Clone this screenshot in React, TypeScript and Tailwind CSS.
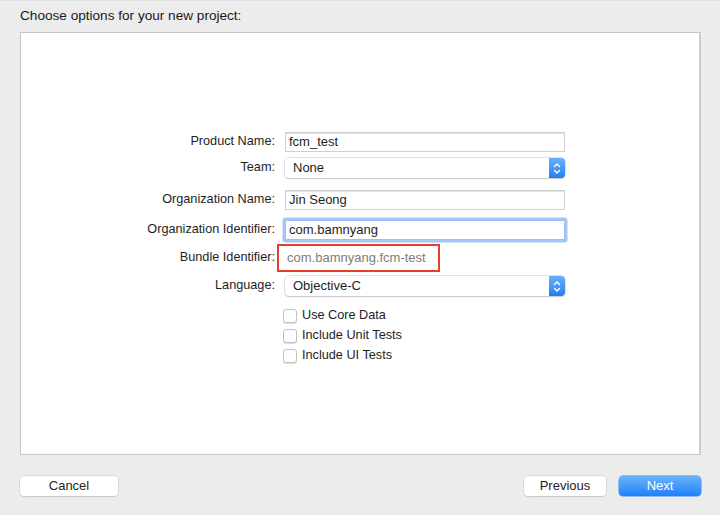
import React from "react";

function Stepper() {
  return (
    <div className="w-[16px] h-full rounded-r-[4px] bg-gradient-to-b from-[#69b1fa] to-[#1c7ff5] flex items-center justify-center">
      <svg width="8" height="13" viewBox="0 0 8 13" fill="none" stroke="white" strokeWidth="1.4" strokeLinecap="round" strokeLinejoin="round">
        <path d="M1.5 4.5 L4 2 L6.5 4.5" />
        <path d="M1.5 8.5 L4 11 L6.5 8.5" />
      </svg>
    </div>
  );
}

function Label({ children }: { children: React.ReactNode }) {
  return <div className="w-[255px] shrink-0 text-right pr-[1px] text-[12.7px] text-[#1e1e1e]">{children}</div>;
}

function TextField({ value }: { value: string }) {
  return (
    <div className="w-[280px] h-[20px] bg-white border border-[#cfcfcf] shadow-[inset_0_1px_0_#e4e4e4] flex items-center pl-[3px] text-[13px] text-[#1e1e1e]">
      {value}
    </div>
  );
}

function Popup({ value }: { value: string }) {
  return (
    <div className="w-[280px] h-[20px] bg-white rounded-[4px] shadow-[0_0_0_0.5px_#c4c4c4,0_1px_1px_#cfcfcf] flex items-center justify-between">
      <span className="pl-[8px] text-[13px] text-[#1e1e1e]">{value}</span>
      <Stepper />
    </div>
  );
}

function Check({ label }: { label: string }) {
  return (
    <div className="flex items-center h-[20px]">
      <div className="w-[14px] h-[14px] rounded-[3px] bg-white border border-[#c2c2c2] shadow-[0_1px_0_#e0e0e0]" />
      <span className="ml-[5px] text-[12.7px] text-[#1e1e1e]">{label}</span>
    </div>
  );
}

export default function App() {
  return (
    <div
      className="w-[720px] h-[515px] bg-[#ececec] flex flex-col border-t border-[#e2e2e2]"
      style={{ fontFamily: '"Liberation Sans", Arial, sans-serif' }}
    >
      <div className="h-[31px] pl-[20px] pt-[7px] text-[13.6px] leading-[16px] text-[#1a1a1a]">Choose options for your new project:</div>
      <div className="ml-[20px] w-[681px] h-[423px] bg-white border border-[#c6c6c6] border-r-2 border-r-[#cdcdcd] flex flex-col pt-[99px]">
        <div className="flex items-center gap-[9px]">
          <Label>Product Name:</Label>
          <TextField value="fcm_test" />
        </div>
        <div className="flex items-center gap-[9px] mt-[6px]">
          <Label>Team:</Label>
          <Popup value="None" />
        </div>
        <div className="flex items-center gap-[9px] mt-[12px]">
          <Label>Organization Name:</Label>
          <TextField value="Jin Seong" />
        </div>
        <div className="flex items-center gap-[9px] mt-[10px]">
          <Label>Organization Identifier:</Label>
          <div className="w-[280px] h-[20px] bg-white border border-[#9bbfef] shadow-[0_0_0_2.5px_#a6c8f4] rounded-[1px] flex items-center pl-[3px] text-[13px] text-[#1e1e1e]">
            com.bamnyang
          </div>
        </div>
        <div className="flex items-center gap-[9px] mt-[4px]">
          <Label>Bundle Identifier:</Label>
          <div className="-ml-[8px] w-[163px] h-[28px] border-2 border-[#e2402b] flex items-center pl-[8px] text-[13px] text-[#7d7d7d]">
            com.bamnyang.fcm-test
          </div>
        </div>
        <div className="flex items-center gap-[9px] mt-[4px]">
          <Label>Language:</Label>
          <Popup value="Objective-C" />
        </div>
        <div className="flex flex-col ml-[262px] mt-[10px]">
          <Check label="Use Core Data" />
          <Check label="Include Unit Tests" />
          <Check label="Include UI Tests" />
        </div>
      </div>
      <div className="flex items-center mt-[21px] pl-[20px] pr-[19px]">
        <button className="w-[98px] h-[20px] bg-white rounded-[4px] shadow-[0_0_0_0.5px_#c6c6c6,0_1px_1px_#cdcdcd] text-[13px] text-[#1e1e1e] flex items-center justify-center">
          Cancel
        </button>
        <div className="flex-1" />
        <button className="w-[82px] h-[20px] bg-white rounded-[4px] shadow-[0_0_0_0.5px_#c6c6c6,0_1px_1px_#cdcdcd] text-[13px] text-[#1e1e1e] flex items-center justify-center">
          Previous
        </button>
        <button className="ml-[13px] w-[82px] h-[20px] rounded-[4px] bg-gradient-to-b from-[#6ab2fb] to-[#1b80f8] shadow-[0_0_0_0.5px_#3a8ef0] text-[13px] text-white flex items-center justify-center">
          Next
        </button>
      </div>
    </div>
  );
}
